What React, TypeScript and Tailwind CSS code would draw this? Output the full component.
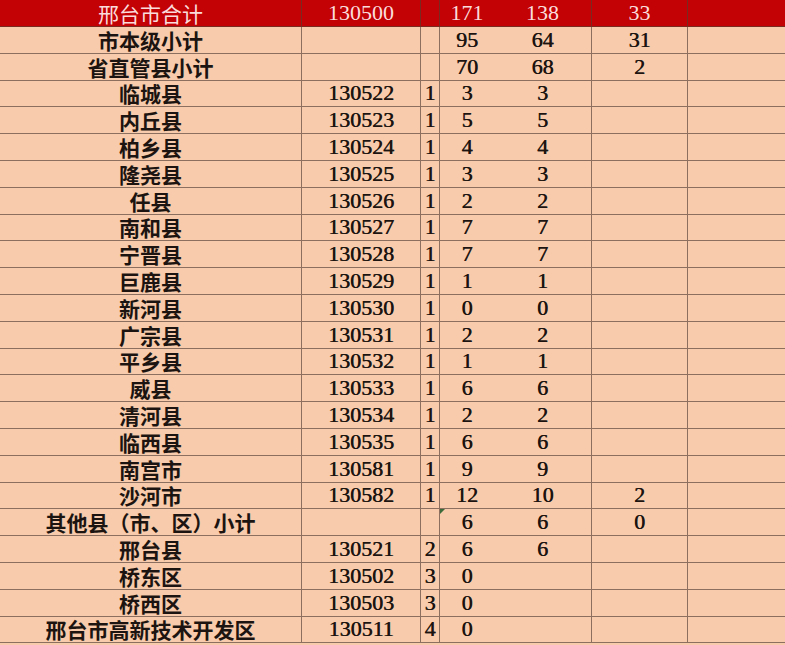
import React from "react";

type Row = {
  name: string;
  code?: string;
  t?: string;
  a?: string;
  b?: string;
  c?: string;
  mark?: boolean;
};

const rows: Row[] = [
  { name: "市本级小计", a: "95", b: "64", c: "31" },
  { name: "省直管县小计", a: "70", b: "68", c: "2" },
  { name: "临城县", code: "130522", t: "1", a: "3", b: "3" },
  { name: "内丘县", code: "130523", t: "1", a: "5", b: "5" },
  { name: "柏乡县", code: "130524", t: "1", a: "4", b: "4" },
  { name: "隆尧县", code: "130525", t: "1", a: "3", b: "3" },
  { name: "任县", code: "130526", t: "1", a: "2", b: "2" },
  { name: "南和县", code: "130527", t: "1", a: "7", b: "7" },
  { name: "宁晋县", code: "130528", t: "1", a: "7", b: "7" },
  { name: "巨鹿县", code: "130529", t: "1", a: "1", b: "1" },
  { name: "新河县", code: "130530", t: "1", a: "0", b: "0" },
  { name: "广宗县", code: "130531", t: "1", a: "2", b: "2" },
  { name: "平乡县", code: "130532", t: "1", a: "1", b: "1" },
  { name: "威县", code: "130533", t: "1", a: "6", b: "6" },
  { name: "清河县", code: "130534", t: "1", a: "2", b: "2" },
  { name: "临西县", code: "130535", t: "1", a: "6", b: "6" },
  { name: "南宫市", code: "130581", t: "1", a: "9", b: "9" },
  { name: "沙河市", code: "130582", t: "1", a: "12", b: "10", c: "2" },
  { name: "其他县（市、区）小计", a: "6", b: "6", c: "0", mark: true },
  { name: "邢台县", code: "130521", t: "2", a: "6", b: "6" },
  { name: "桥东区", code: "130502", t: "3", a: "0" },
  { name: "桥西区", code: "130503", t: "3", a: "0" },
  { name: "邢台市高新技术开发区", code: "130511", t: "4", a: "0" },
];

const cjk = "[font-family:Noto_Sans_CJK_SC,sans-serif]";
const num = "[font-family:Liberation_Serif,serif] font-normal [text-shadow:0.6px_0_0_#1c1410]";
const hnum = "[font-family:Liberation_Serif,serif] font-normal";

const cell = "h-[26.8px] border-b border-[#8c6f5f] flex items-center justify-center leading-[22px]";
const hcell = "h-[27px] bg-[#c20205] border-b border-[#7a2a20] flex items-center justify-center leading-[22px] text-[#fbdcdc]";

export default function App() {
  return (
    <div className="w-[785px] h-[645px] overflow-hidden bg-[#f7cbab] text-[#1c1410] [font-family:Liberation_Serif,Noto_Sans_CJK_SC,serif]">
      <div className="grid grid-cols-[302px_119px_19px_54px_98px_96px_97px]">
        <div className={`${hcell} border-r text-[21px] font-normal ${cjk}`}>邢台市合计</div>
        <div className={`${hcell} border-r text-[22px] ${hnum}`}>130500</div>
        <div className={`${hcell} border-r`} />
        <div className={`${hcell} text-[22px] ${hnum}`}>171</div>
        <div className={`${hcell} border-r text-[22px] ${hnum}`}>138</div>
        <div className={`${hcell} border-r text-[22px] ${hnum}`}>33</div>
        <div className={hcell} />

        {rows.map((r, i) => (
          <React.Fragment key={i}>
            <div className={`${cell} border-r text-[21px] font-semibold ${cjk}`}>{r.name}</div>
            <div className={`${cell} border-r text-[22px] ${num}`}>{r.code}</div>
            <div className={`${cell} border-r text-[22px] ${num}`}>{r.t}</div>
            <div className={`relative ${cell} text-[22px] ${num}`}>
              {r.mark && (
                <span className="absolute left-0 top-0 w-0 h-0 border-t-[5px] border-r-[5px] border-t-[#3d6b3a] border-r-transparent" />
              )}
              {r.a}
            </div>
            <div className={`${cell} border-r text-[22px] ${num}`}>{r.b}</div>
            <div className={`${cell} border-r text-[22px] ${num}`}>{r.c}</div>
            <div className={cell} />
          </React.Fragment>
        ))}
      </div>
    </div>
  );
}
